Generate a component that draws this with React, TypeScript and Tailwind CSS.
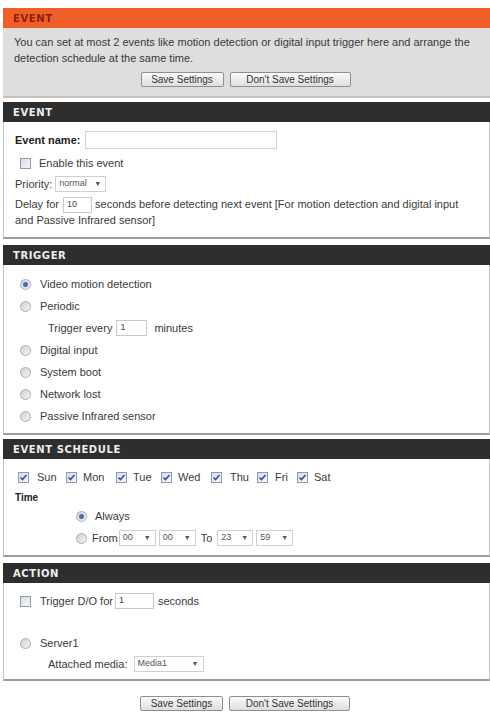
import React from "react";

const Check = ({ checked = false }: { checked?: boolean }) => (
  <span className="inline-flex items-center justify-center w-[11px] h-[11px] border border-[#8e9bb0] bg-gradient-to-br from-[#dcdce4] to-[#f6f6f8] shrink-0">
    {checked && (
      <svg width="9" height="9" viewBox="0 0 9 9">
        <path d="M1.5 4.5 L3.5 6.5 L7.5 2" stroke="#3a4fa0" strokeWidth="1.6" fill="none" />
      </svg>
    )}
  </span>
);

const Radio = ({ checked = false }: { checked?: boolean }) => (
  <span className="inline-flex items-center justify-center w-[11px] h-[11px] rounded-full border border-[#a8adb5] bg-gradient-to-br from-[#cfd2d8] to-[#f4f4f6] shrink-0">
    {checked && <span className="w-[5px] h-[5px] rounded-full bg-[#4d6ab0]" />}
  </span>
);

const TextBox = ({ w, value = "" }: { w: string; value?: string }) => (
  <span className={`inline-flex items-center h-[16px] border border-[#c8c8c8] bg-white pl-[3px] text-[9px] text-[#444] shrink-0 ${w}`}>
    {value}
  </span>
);

const Select = ({ w, value }: { w: string; value: string }) => (
  <span className={`inline-flex items-center justify-between h-[16px] border border-[#cfcfcf] bg-white pl-[3px] pr-[4px] text-[9px] text-[#555] shrink-0 ${w}`}>
    <span>{value}</span>
    <span className="text-[7px] text-[#555]">▼</span>
  </span>
);

const Btn = ({ w, children }: { w: string; children: React.ReactNode }) => (
  <span className={`inline-flex items-center justify-center h-[15px] border border-[#8f8f8f] rounded-[2px] bg-gradient-to-b from-[#fbfbfb] to-[#dedede] text-[10px] text-[#333] ${w}`}>
    {children}
  </span>
);

const Header = ({ title }: { title: string }) => (
  <div className="h-[20px] bg-[#2e2e2e] flex items-center pl-[10px] font-['DejaVu_Sans',sans-serif] font-bold text-[10px] tracking-[0.6px] text-[#eeeeee]">
    {title}
  </div>
);

const Section = ({ title, children, cls }: { title: string; children: React.ReactNode; cls: string }) => (
  <div className={cls}>
    <Header title={title} />
    <div className="border-l border-r border-b-2 border-l-[#c4c4c4] border-r-[#c4c4c4] border-b-[#9c9c9c] bg-white">
      {children}
    </div>
  </div>
);

const Day = ({ label, w, gap }: { label: string; w: string; gap: string }) => (
  <span className={`flex items-center shrink-0 ${w}`}>
    <Check checked />
    <span className={gap}>{label}</span>
  </span>
);

export default function App() {
  return (
    <div className="w-[490px] h-[712px] bg-white pt-[8px] pl-[3px] overflow-hidden font-['Liberation_Sans',Arial,sans-serif] text-[11px] text-[#3a3a3a]">
      <div className="w-[487px]">
        <div className="h-[20px] bg-[#f05f27] flex items-center pl-[10px] font-['DejaVu_Sans',sans-serif] font-bold text-[10px] tracking-[0.6px] text-[#8c1f0e]">
          EVENT
        </div>
        <div className="bg-[#dedede] border-b-2 border-[#cbbfba] pl-[11px] pr-[10px] pt-[6px] pb-[9px]">
          <div className="leading-[16px]">
            You can set at most 2 events like motion detection or digital input trigger here and arrange the detection schedule at the same time.
          </div>
          <div className="flex justify-center gap-[6px] mt-[6px] pr-[3px]">
            <Btn w="w-[83px]">Save Settings</Btn>
            <Btn w="w-[121px]">Don't Save Settings</Btn>
          </div>
        </div>

        <Section title="EVENT" cls="mt-[4px]">
          <div className="pt-[6px] pl-[11px] pr-[8px] pb-[10px]">
            <div className="h-[24px] flex items-center">
              <span className="font-bold text-[#222]">Event name:</span>
              <span className="ml-[5px] inline-flex h-[18px] w-[192px] border border-[#d0d0d0] bg-white" />
            </div>
            <div className="h-[22px] flex items-center pl-[5px] gap-[8px]">
              <Check />
              <span>Enable this event</span>
            </div>
            <div className="h-[20px] flex items-center gap-[3px]">
              <span>Priority:</span>
              <Select w="w-[51px]" value="normal" />
            </div>
            <div className="mt-[2px] h-[17px] flex items-center whitespace-nowrap">
              <span>Delay for</span>
              <TextBox w="w-[29px] ml-[4px] mr-[3px]" value="10" />
              <span>seconds before detecting next event [For motion detection and digital input</span>
            </div>
            <div className="leading-[14px]">and Passive Infrared sensor]</div>
          </div>
        </Section>

        <Section title="TRIGGER" cls="mt-[6px]">
          <div className="pt-[8px] pb-[6px] pl-[16px]">
            <div className="h-[22px] flex items-center gap-[9px]"><Radio checked /><span>Video motion detection</span></div>
            <div className="h-[22px] flex items-center gap-[9px]"><Radio /><span>Periodic</span></div>
            <div className="h-[22px] flex items-center pl-[28px] gap-[4px]">
              <span>Trigger every</span>
              <TextBox w="w-[31px]" value="1" />
              <span className="ml-[3px]">minutes</span>
            </div>
            <div className="h-[22px] flex items-center gap-[9px]"><Radio /><span>Digital input</span></div>
            <div className="h-[22px] flex items-center gap-[9px]"><Radio /><span>System boot</span></div>
            <div className="h-[22px] flex items-center gap-[9px]"><Radio /><span>Network lost</span></div>
            <div className="h-[22px] flex items-center gap-[9px]"><Radio /><span>Passive Infrared sensor</span></div>
          </div>
        </Section>

        <Section title="EVENT SCHEDULE" cls="mt-[4px]">
          <div className="pt-[7px] pb-[6px] pl-[11px]">
            <div className="h-[22px] flex items-center pl-[3px]">
              <Day label="Sun" w="w-[48px]" gap="ml-[8px]" />
              <Day label="Mon" w="w-[50px]" gap="ml-[6px]" />
              <Day label="Tue" w="w-[45px]" gap="ml-[6px]" />
              <Day label="Wed" w="w-[50px]" gap="ml-[6px]" />
              <Day label="Thu" w="w-[46px]" gap="ml-[8px]" />
              <Day label="Fri" w="w-[40px]" gap="ml-[7px]" />
              <Day label="Sat" w="w-[40px]" gap="ml-[6px]" />
            </div>
            <div className="h-[18px] flex items-center font-bold text-[10px] text-[#222]">Time</div>
            <div className="h-[21px] flex items-center pl-[61px] gap-[8px]"><Radio checked /><span>Always</span></div>
            <div className="h-[22px] flex items-center pl-[61px]">
              <Radio />
              <span className="ml-[5px] mr-[1px]">From</span>
              <Select w="w-[37px]" value="00" />
              <span className="w-[3px]" />
              <Select w="w-[37px]" value="00" />
              <span className="mx-[5px]">To</span>
              <Select w="w-[36px]" value="23" />
              <span className="w-[3px]" />
              <Select w="w-[37px]" value="59" />
            </div>
          </div>
        </Section>

        <Section title="ACTION" cls="mt-[6px]">
          <div className="pt-[7px] pb-[5px] pl-[16px]">
            <div className="h-[22px] flex items-center">
              <Check />
              <span className="ml-[9px] mr-[2px]">Trigger D/O for</span>
              <TextBox w="w-[39px]" value="1" />
              <span className="ml-[4px]">seconds</span>
            </div>
            <div className="h-[20px]" />
            <div className="h-[22px] flex items-center gap-[9px]"><Radio /><span>Server1</span></div>
            <div className="h-[20px] flex items-center pl-[28px] gap-[6px]">
              <span>Attached media:</span>
              <Select w="w-[70px]" value="Media1" />
            </div>
          </div>
        </Section>

        <div className="flex justify-center gap-[6px] mt-[15px] pr-[3px]">
          <Btn w="w-[83px]">Save Settings</Btn>
          <Btn w="w-[121px]">Don't Save Settings</Btn>
        </div>
      </div>
    </div>
  );
}
